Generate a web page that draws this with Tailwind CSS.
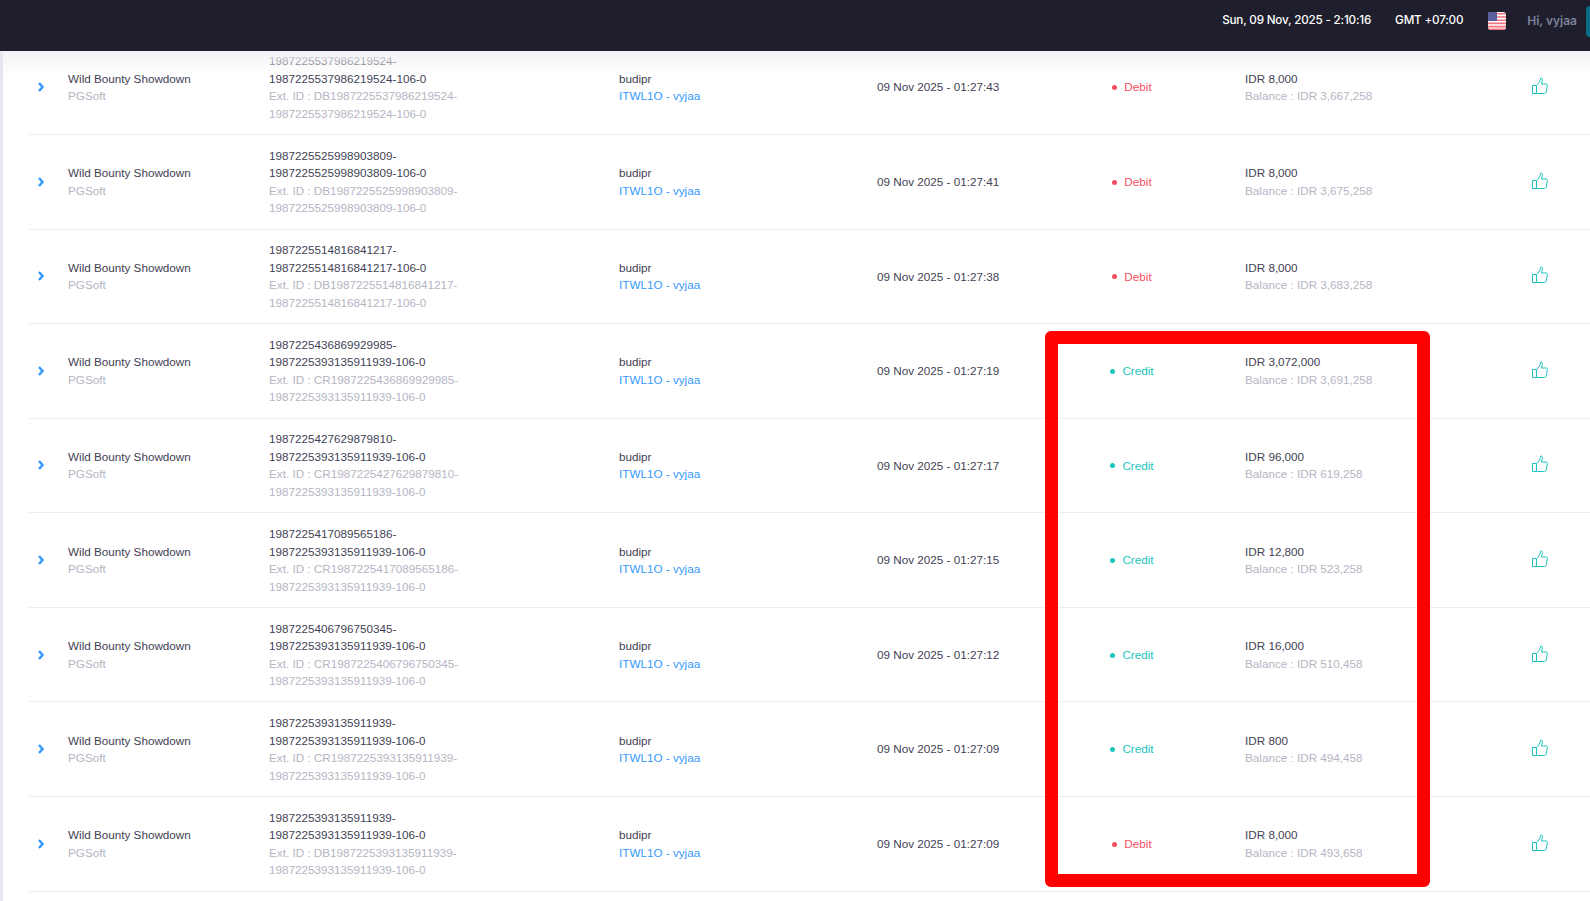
<!DOCTYPE html>
<html lang="en">
<head>
    <meta charset="UTF-8">
    <title>Transactions</title>
    <script src="https://cdn.jsdelivr.net/npm/@tailwindcss/browser@4"></script>
</head>
<body class="h-[901px] overflow-hidden bg-white flex flex-col font-['Liberation_Sans',Arial,sans-serif] text-[11.7px] leading-[17.55px] text-[#3f4254]">
    <!-- top bar -->
    <header class="h-[51px] shrink-0 bg-[#1e1e2d] flex items-center justify-end pb-[9px] font-['Inter',sans-serif] font-medium relative z-20">
        <span class="text-white tracking-[-0.2px] mr-[24px]">Sun, 09 Nov, 2025 - 2:10:16</span>
        <span class="text-white tracking-[-0.2px] mr-[25px]">GMT +07:00</span>
        <svg class="w-[18px] h-[18px] rounded-[3px] mr-[21px]" viewBox="0 0 18 18">
            <rect width="18" height="18" fill="#fff"/>
            <path d="M0 1h18v1.6H0zM0 4.200h18v1.600H0zM0 7.400h18V9H0zM0 10.600h18v1.600H0zM0 13.800h18v1.600H0zM0 16.600h18V18H0z" fill="#f1737f"/>
            <rect width="9" height="9" fill="#5a5f9e"/>
        </svg>
        <span class="text-[12px] text-[#7e8299] font-semibold mr-[9px]">Hi, vyjaa</span>
        <div class="w-[4px] h-[31px] bg-[#0c6b85] rounded-l-[5px]"></div>
    </header>

    <main class="relative flex-1 overflow-hidden border-l-[3px] border-[#e6e6f2] pl-[26px]">
        <div class="absolute top-0 inset-x-0 h-[24px] bg-gradient-to-b from-[#f3f3f7] to-white/0 z-10"></div>

        <div class="-mt-[10.7px]">
            <!-- row -->
            <div class="h-[94.6px] border-b border-[#ebedf3] grid grid-cols-[39px_201px_350px_258px_205px_100px_350px_58px] items-center">
                <svg class="w-[8px] h-[10px] ml-[8px]" viewBox="0 0 8 10"><path d="M2 1l3.500 4L2 9" fill="none" stroke="#3699ff" stroke-width="2.5"/></svg>
                <div>Wild Bounty Showdown<br><span class="text-[#b5b5c3]">PGSoft</span></div>
                <div>1987225537986219524-<br>1987225537986219524-106-0<br><span class="text-[#b5b5c3]">Ext. ID : DB1987225537986219524-<br>1987225537986219524-106-0</span></div>
                <div>budipr<br><span class="text-[#3699ff]">ITWL1O - vyjaa</span></div>
                <div>09 Nov 2025 - 01:27:43</div>
                <div class="flex items-center justify-center gap-[7px] text-[#f64e60]"><span class="w-[5px] h-[5px] rounded-full bg-[#f64e60] mt-[1px]"></span>Debit</div>
                <div class="pl-[63px]">IDR 8,000<br><span class="text-[#b5b5c3]">Balance : IDR 3,667,258</span></div>
                <svg class="w-[16px] h-[17px] -mt-[3px]" viewBox="0 0 16 17"><path d="M.5 8.500h4v8h-4zM4.500 8.500C6.500 7 7.800 5 8.800 1c1.300-.3 1.900 1 1.500 2.600L9.500 7h4.700c1 0 1.400.8 1.200 1.600l-1.300 6.700c-.2.800-.7 1.200-1.500 1.200H4.500" fill="none" stroke="#1bc5bd"/></svg>
            </div>
            <div class="h-[94.6px] border-b border-[#ebedf3] grid grid-cols-[39px_201px_350px_258px_205px_100px_350px_58px] items-center">
                <svg class="w-[8px] h-[10px] ml-[8px]" viewBox="0 0 8 10"><path d="M2 1l3.500 4L2 9" fill="none" stroke="#3699ff" stroke-width="2.5"/></svg>
                <div>Wild Bounty Showdown<br><span class="text-[#b5b5c3]">PGSoft</span></div>
                <div>1987225525998903809-<br>1987225525998903809-106-0<br><span class="text-[#b5b5c3]">Ext. ID : DB1987225525998903809-<br>1987225525998903809-106-0</span></div>
                <div>budipr<br><span class="text-[#3699ff]">ITWL1O - vyjaa</span></div>
                <div>09 Nov 2025 - 01:27:41</div>
                <div class="flex items-center justify-center gap-[7px] text-[#f64e60]"><span class="w-[5px] h-[5px] rounded-full bg-[#f64e60] mt-[1px]"></span>Debit</div>
                <div class="pl-[63px]">IDR 8,000<br><span class="text-[#b5b5c3]">Balance : IDR 3,675,258</span></div>
                <svg class="w-[16px] h-[17px] -mt-[3px]" viewBox="0 0 16 17"><path d="M.5 8.500h4v8h-4zM4.500 8.500C6.500 7 7.800 5 8.800 1c1.300-.3 1.900 1 1.500 2.600L9.500 7h4.700c1 0 1.400.8 1.200 1.600l-1.300 6.700c-.2.800-.7 1.200-1.500 1.200H4.500" fill="none" stroke="#1bc5bd"/></svg>
            </div>
            <div class="h-[94.6px] border-b border-[#ebedf3] grid grid-cols-[39px_201px_350px_258px_205px_100px_350px_58px] items-center">
                <svg class="w-[8px] h-[10px] ml-[8px]" viewBox="0 0 8 10"><path d="M2 1l3.500 4L2 9" fill="none" stroke="#3699ff" stroke-width="2.5"/></svg>
                <div>Wild Bounty Showdown<br><span class="text-[#b5b5c3]">PGSoft</span></div>
                <div>1987225514816841217-<br>1987225514816841217-106-0<br><span class="text-[#b5b5c3]">Ext. ID : DB1987225514816841217-<br>1987225514816841217-106-0</span></div>
                <div>budipr<br><span class="text-[#3699ff]">ITWL1O - vyjaa</span></div>
                <div>09 Nov 2025 - 01:27:38</div>
                <div class="flex items-center justify-center gap-[7px] text-[#f64e60]"><span class="w-[5px] h-[5px] rounded-full bg-[#f64e60] mt-[1px]"></span>Debit</div>
                <div class="pl-[63px]">IDR 8,000<br><span class="text-[#b5b5c3]">Balance : IDR 3,683,258</span></div>
                <svg class="w-[16px] h-[17px] -mt-[3px]" viewBox="0 0 16 17"><path d="M.5 8.500h4v8h-4zM4.500 8.500C6.500 7 7.800 5 8.800 1c1.300-.3 1.900 1 1.500 2.600L9.500 7h4.700c1 0 1.400.8 1.200 1.600l-1.300 6.700c-.2.800-.7 1.200-1.500 1.200H4.500" fill="none" stroke="#1bc5bd"/></svg>
            </div>
            <div class="h-[94.6px] border-b border-[#ebedf3] grid grid-cols-[39px_201px_350px_258px_205px_100px_350px_58px] items-center">
                <svg class="w-[8px] h-[10px] ml-[8px]" viewBox="0 0 8 10"><path d="M2 1l3.500 4L2 9" fill="none" stroke="#3699ff" stroke-width="2.5"/></svg>
                <div>Wild Bounty Showdown<br><span class="text-[#b5b5c3]">PGSoft</span></div>
                <div>1987225436869929985-<br>1987225393135911939-106-0<br><span class="text-[#b5b5c3]">Ext. ID : CR1987225436869929985-<br>1987225393135911939-106-0</span></div>
                <div>budipr<br><span class="text-[#3699ff]">ITWL1O - vyjaa</span></div>
                <div>09 Nov 2025 - 01:27:19</div>
                <div class="flex items-center justify-center gap-[7px] text-[#1bc5bd]"><span class="w-[5px] h-[5px] rounded-full bg-[#1bc5bd] mt-[1px]"></span>Credit</div>
                <div class="pl-[63px]">IDR 3,072,000<br><span class="text-[#b5b5c3]">Balance : IDR 3,691,258</span></div>
                <svg class="w-[16px] h-[17px] -mt-[3px]" viewBox="0 0 16 17"><path d="M.5 8.500h4v8h-4zM4.500 8.500C6.500 7 7.800 5 8.800 1c1.300-.3 1.900 1 1.500 2.600L9.500 7h4.700c1 0 1.400.8 1.200 1.600l-1.300 6.700c-.2.800-.7 1.200-1.500 1.200H4.500" fill="none" stroke="#1bc5bd"/></svg>
            </div>
            <div class="h-[94.6px] border-b border-[#ebedf3] grid grid-cols-[39px_201px_350px_258px_205px_100px_350px_58px] items-center">
                <svg class="w-[8px] h-[10px] ml-[8px]" viewBox="0 0 8 10"><path d="M2 1l3.500 4L2 9" fill="none" stroke="#3699ff" stroke-width="2.5"/></svg>
                <div>Wild Bounty Showdown<br><span class="text-[#b5b5c3]">PGSoft</span></div>
                <div>1987225427629879810-<br>1987225393135911939-106-0<br><span class="text-[#b5b5c3]">Ext. ID : CR1987225427629879810-<br>1987225393135911939-106-0</span></div>
                <div>budipr<br><span class="text-[#3699ff]">ITWL1O - vyjaa</span></div>
                <div>09 Nov 2025 - 01:27:17</div>
                <div class="flex items-center justify-center gap-[7px] text-[#1bc5bd]"><span class="w-[5px] h-[5px] rounded-full bg-[#1bc5bd] mt-[1px]"></span>Credit</div>
                <div class="pl-[63px]">IDR 96,000<br><span class="text-[#b5b5c3]">Balance : IDR 619,258</span></div>
                <svg class="w-[16px] h-[17px] -mt-[3px]" viewBox="0 0 16 17"><path d="M.5 8.500h4v8h-4zM4.500 8.500C6.500 7 7.800 5 8.800 1c1.300-.3 1.900 1 1.500 2.600L9.500 7h4.700c1 0 1.400.8 1.200 1.600l-1.300 6.700c-.2.800-.7 1.200-1.500 1.200H4.500" fill="none" stroke="#1bc5bd"/></svg>
            </div>
            <div class="h-[94.6px] border-b border-[#ebedf3] grid grid-cols-[39px_201px_350px_258px_205px_100px_350px_58px] items-center">
                <svg class="w-[8px] h-[10px] ml-[8px]" viewBox="0 0 8 10"><path d="M2 1l3.500 4L2 9" fill="none" stroke="#3699ff" stroke-width="2.5"/></svg>
                <div>Wild Bounty Showdown<br><span class="text-[#b5b5c3]">PGSoft</span></div>
                <div>1987225417089565186-<br>1987225393135911939-106-0<br><span class="text-[#b5b5c3]">Ext. ID : CR1987225417089565186-<br>1987225393135911939-106-0</span></div>
                <div>budipr<br><span class="text-[#3699ff]">ITWL1O - vyjaa</span></div>
                <div>09 Nov 2025 - 01:27:15</div>
                <div class="flex items-center justify-center gap-[7px] text-[#1bc5bd]"><span class="w-[5px] h-[5px] rounded-full bg-[#1bc5bd] mt-[1px]"></span>Credit</div>
                <div class="pl-[63px]">IDR 12,800<br><span class="text-[#b5b5c3]">Balance : IDR 523,258</span></div>
                <svg class="w-[16px] h-[17px] -mt-[3px]" viewBox="0 0 16 17"><path d="M.5 8.500h4v8h-4zM4.500 8.500C6.500 7 7.800 5 8.800 1c1.300-.3 1.900 1 1.500 2.600L9.500 7h4.700c1 0 1.400.8 1.200 1.600l-1.300 6.700c-.2.800-.7 1.200-1.500 1.200H4.500" fill="none" stroke="#1bc5bd"/></svg>
            </div>
            <div class="h-[94.6px] border-b border-[#ebedf3] grid grid-cols-[39px_201px_350px_258px_205px_100px_350px_58px] items-center">
                <svg class="w-[8px] h-[10px] ml-[8px]" viewBox="0 0 8 10"><path d="M2 1l3.500 4L2 9" fill="none" stroke="#3699ff" stroke-width="2.5"/></svg>
                <div>Wild Bounty Showdown<br><span class="text-[#b5b5c3]">PGSoft</span></div>
                <div>1987225406796750345-<br>1987225393135911939-106-0<br><span class="text-[#b5b5c3]">Ext. ID : CR1987225406796750345-<br>1987225393135911939-106-0</span></div>
                <div>budipr<br><span class="text-[#3699ff]">ITWL1O - vyjaa</span></div>
                <div>09 Nov 2025 - 01:27:12</div>
                <div class="flex items-center justify-center gap-[7px] text-[#1bc5bd]"><span class="w-[5px] h-[5px] rounded-full bg-[#1bc5bd] mt-[1px]"></span>Credit</div>
                <div class="pl-[63px]">IDR 16,000<br><span class="text-[#b5b5c3]">Balance : IDR 510,458</span></div>
                <svg class="w-[16px] h-[17px] -mt-[3px]" viewBox="0 0 16 17"><path d="M.5 8.500h4v8h-4zM4.500 8.500C6.500 7 7.800 5 8.800 1c1.300-.3 1.900 1 1.500 2.600L9.500 7h4.700c1 0 1.400.8 1.200 1.600l-1.300 6.700c-.2.800-.7 1.200-1.500 1.200H4.500" fill="none" stroke="#1bc5bd"/></svg>
            </div>
            <div class="h-[94.6px] border-b border-[#ebedf3] grid grid-cols-[39px_201px_350px_258px_205px_100px_350px_58px] items-center">
                <svg class="w-[8px] h-[10px] ml-[8px]" viewBox="0 0 8 10"><path d="M2 1l3.500 4L2 9" fill="none" stroke="#3699ff" stroke-width="2.5"/></svg>
                <div>Wild Bounty Showdown<br><span class="text-[#b5b5c3]">PGSoft</span></div>
                <div>1987225393135911939-<br>1987225393135911939-106-0<br><span class="text-[#b5b5c3]">Ext. ID : CR1987225393135911939-<br>1987225393135911939-106-0</span></div>
                <div>budipr<br><span class="text-[#3699ff]">ITWL1O - vyjaa</span></div>
                <div>09 Nov 2025 - 01:27:09</div>
                <div class="flex items-center justify-center gap-[7px] text-[#1bc5bd]"><span class="w-[5px] h-[5px] rounded-full bg-[#1bc5bd] mt-[1px]"></span>Credit</div>
                <div class="pl-[63px]">IDR 800<br><span class="text-[#b5b5c3]">Balance : IDR 494,458</span></div>
                <svg class="w-[16px] h-[17px] -mt-[3px]" viewBox="0 0 16 17"><path d="M.5 8.500h4v8h-4zM4.500 8.500C6.500 7 7.800 5 8.800 1c1.300-.3 1.900 1 1.500 2.600L9.500 7h4.700c1 0 1.400.8 1.200 1.600l-1.300 6.700c-.2.800-.7 1.200-1.500 1.200H4.500" fill="none" stroke="#1bc5bd"/></svg>
            </div>
            <div class="h-[94.6px] border-b border-[#ebedf3] grid grid-cols-[39px_201px_350px_258px_205px_100px_350px_58px] items-center">
                <svg class="w-[8px] h-[10px] ml-[8px]" viewBox="0 0 8 10"><path d="M2 1l3.500 4L2 9" fill="none" stroke="#3699ff" stroke-width="2.5"/></svg>
                <div>Wild Bounty Showdown<br><span class="text-[#b5b5c3]">PGSoft</span></div>
                <div>1987225393135911939-<br>1987225393135911939-106-0<br><span class="text-[#b5b5c3]">Ext. ID : DB1987225393135911939-<br>1987225393135911939-106-0</span></div>
                <div>budipr<br><span class="text-[#3699ff]">ITWL1O - vyjaa</span></div>
                <div>09 Nov 2025 - 01:27:09</div>
                <div class="flex items-center justify-center gap-[7px] text-[#f64e60]"><span class="w-[5px] h-[5px] rounded-full bg-[#f64e60] mt-[1px]"></span>Debit</div>
                <div class="pl-[63px]">IDR 8,000<br><span class="text-[#b5b5c3]">Balance : IDR 493,658</span></div>
                <svg class="w-[16px] h-[17px] -mt-[3px]" viewBox="0 0 16 17"><path d="M.5 8.500h4v8h-4zM4.500 8.500C6.500 7 7.800 5 8.800 1c1.300-.3 1.900 1 1.500 2.600L9.500 7h4.700c1 0 1.400.8 1.200 1.600l-1.300 6.700c-.2.800-.7 1.200-1.500 1.200H4.500" fill="none" stroke="#1bc5bd"/></svg>
            </div>
        </div>

        <!-- red highlight drawn on top of the table -->
        <div class="absolute left-[1042px] top-[280px] w-[385px] h-[556px] border-[13px] border-[#ff0000] rounded-[6px]"></div>
    </main>
</body>
</html>
